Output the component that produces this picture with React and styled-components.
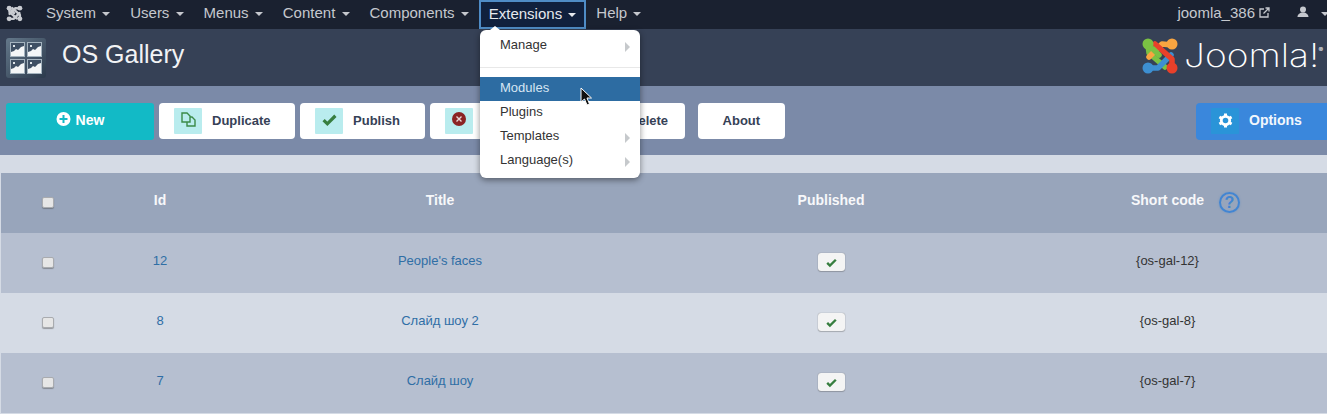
import React from 'react';
import styled, { createGlobalStyle } from 'styled-components';

const GlobalStyle = createGlobalStyle`
  html, body {
    margin: 0;
    padding: 0;
    background: #d5dbe5;
    overflow: hidden;
  }
  body {
    font-family: "Liberation Sans", Arial, sans-serif;
    color: #333;
  }
`;

const Page = styled.div`
  position: relative;
  width: 1327px;
  height: 414px;
  overflow: hidden;
`;

const Navbar = styled.nav`
  display: flex;
  align-items: stretch;
  height: 28px;
  padding-bottom: 1px;
  background: #1a2130;
`;

const Brand = styled.div`
  display: flex;
  align-items: center;
  justify-content: center;
  width: 28px;
  margin-right: 8px;
  padding-bottom: 1px;
`;

const NavItem = styled.div`
  display: flex;
  align-items: center;
  box-sizing: border-box;
  height: 29px;
  padding: 0 10px 4px;
  font-size: 15px;
  color: ${p => (p.$active ? '#e6e9ee' : '#c5c8ce')};
  white-space: nowrap;
  ${p => p.$active && `
    background: #10203d;
    border: 2px solid #4f8cc6;
    padding: 0 8px 2px;
  `}
`;

const Caret = styled.span`
  display: inline-block;
  margin-left: ${p => p.$gap || 6.2}px;
  margin-top: 3px;
  border-top: 4px solid currentColor;
  border-left: 4px solid transparent;
  border-right: 4px solid transparent;
`;

const NavRight = styled.div`
  display: flex;
  align-items: center;
  margin-left: auto;
  padding-bottom: 4px;
  color: #c5c8ce;
  font-size: 15px;
`;

const SiteLink = styled.span`
  display: flex;
  align-items: center;
  gap: 4px;
`;

const UserMenu = styled.span`
  display: flex;
  align-items: center;
  margin-left: 27px;
  margin-right: -2px;
`;

const Header = styled.header`
  display: flex;
  align-items: center;
  height: 57px;
  padding-left: 6px;
  background: #364156;
`;

const AppIcon = styled.div`
  display: grid;
  grid-template-columns: 15px 15px;
  grid-auto-rows: 15px;
  gap: 2px;
  align-content: center;
  justify-content: center;
  width: 40px;
  height: 40px;
  border-radius: 3px;
  background: linear-gradient(135deg, #64788a 0%, #2c3a4c 100%);
`;

const Title = styled.h1`
  margin: 0 0 6px 16px;
  font-size: 25px;
  font-weight: 400;
  color: #f2f3f5;
`;

const Logo = styled.div`
  display: flex;
  align-items: center;
  gap: 5px;
  margin-left: auto;
  margin-right: 5px;
  padding-bottom: 4px;
`;

const LogoWord = styled.span`
  position: relative;
  display: block;
  width: 138px;
  font-family: Inter, "Liberation Sans", sans-serif;
  font-size: 32px;
  font-weight: 200;
  line-height: 38px;
  white-space: nowrap;
  color: #fff;
  transform: scaleX(1.16);
  transform-origin: left center;
`;

const LogoMark = styled.sup`
  position: absolute;
  top: -6px;
  left: 116px;
  font-size: 6px;
  font-weight: 400;
`;

const Toolbar = styled.div`
  display: flex;
  align-items: flex-start;
  height: 69px;
  box-sizing: border-box;
  padding: 17px 0 0 6px;
  background: #7b8aa8;
`;

const NewButton = styled.button`
  display: flex;
  align-items: center;
  justify-content: center;
  gap: 5px;
  box-sizing: border-box;
  width: 148px;
  height: 37px;
  margin-right: 5px;
  padding: 0 0 3px;
  border: 0;
  border-radius: 3px;
  background: #12bac6;
  color: #fff;
  font: bold 14px "Liberation Sans", Arial, sans-serif;
`;

const ToolButton = styled.button`
  display: flex;
  align-items: center;
  box-sizing: border-box;
  height: 36px;
  margin-left: ${p => p.$offset || 0}px;
  margin-right: 5px;
  padding: 0 ${p => p.$right || 25}px 2px ${p => (p.$plain ? 25 : 15)}px;
  border: 0;
  border-radius: 4px;
  background: #fff;
  color: #364156;
  font: bold 13px "Liberation Sans", Arial, sans-serif;
`;

const IconBox = styled.span`
  display: flex;
  align-items: center;
  justify-content: center;
  box-sizing: border-box;
  width: 28px;
  height: 26px;
  margin: 2px ${p => p.$gap || 10}px 0 0;
  padding-bottom: ${p => p.$lift || 4}px;
  background: ${p => p.$bg || '#b9ecee'};
  border-radius: 1px;
`;

const OptionsButton = styled.button`
  display: flex;
  align-items: center;
  box-sizing: border-box;
  width: 131px;
  height: 37px;
  margin-left: auto;
  padding: 0 0 3px 15px;
  border: 0;
  border-radius: 4px 0 0 4px;
  background: #3a87dc;
  color: #f3f7fc;
  font: bold 14px "Liberation Sans", Arial, sans-serif;
`;

const Strip = styled.div`
  height: 18px;
`;

const Table = styled.div`
  margin-left: 1px;
`;

const Row = styled.div`
  display: grid;
  grid-template-columns: 93px 132px 428px 354px 319px;
  align-items: center;
  height: 60px;
  background: ${p => p.$bg};
  color: ${p => (p.$head ? '#f7f8fa' : '#333')};
  font-size: ${p => (p.$head ? 14 : 13)}px;
  font-weight: ${p => (p.$head ? 'bold' : 'normal')};
`;

const Cell = styled.div`
  text-align: center;
  padding-bottom: 6px;
`;

const LinkCell = styled(Cell)`
  color: #2f6ea5;
`;

const CheckCell = styled.div`
  display: flex;
  justify-content: center;
`;

const Check = styled.span`
  display: block;
  box-sizing: border-box;
  width: 12px;
  height: 11px;
  margin-top: -1px;
  border: 1px solid #a9abaf;
  border-radius: 2px;
  background: #e6e6e6;
  box-shadow: 0 1px 1px rgba(70, 70, 70, 0.45);
`;

const StateButton = styled.span`
  display: flex;
  align-items: center;
  justify-content: center;
  width: 27px;
  height: 18px;
  margin: -2px auto 0;
  border-radius: 3px;
  background: #f4f4f4;
  box-shadow: 0 0 1px rgba(50, 50, 50, 0.6), 0 1px 1px rgba(50, 50, 50, 0.25);
`;

const ShortHead = styled.span`
  position: relative;
  display: inline-block;
`;

const HelpBadge = styled.span`
  position: absolute;
  top: 0;
  left: 88px;
  display: flex;
  align-items: center;
  justify-content: center;
  box-sizing: border-box;
  width: 21px;
  height: 21px;
  border: 2px solid #4285d2;
  border-radius: 50%;
  color: #4285d2;
  font-size: 16px;
  font-weight: bold;
  box-shadow: 0 0 2px rgba(66, 133, 210, 0.5);
`;

const Menu = styled.div`
  position: absolute;
  top: 30px;
  left: 480px;
  box-sizing: border-box;
  width: 160px;
  height: 148px;
  padding-top: 4px;
  border-radius: 6px;
  background: #fff;
  box-shadow: 0 2px 6px rgba(0, 0, 0, 0.45);
  &::before {
    content: '';
    position: absolute;
    top: -4px;
    left: 10px;
    border-bottom: 4px solid #fff;
    border-left: 5px solid transparent;
    border-right: 5px solid transparent;
  }
`;

const MenuItem = styled.div`
  position: relative;
  box-sizing: border-box;
  height: 24px;
  padding: 3px 0 0 20px;
  line-height: 15px;
  font-size: 13px;
  color: ${p => (p.$active ? '#d6e6f3' : '#333')};
  background: ${p => (p.$active ? '#2d6ca2' : 'transparent')};
  ${p => p.$sub && `
    &::after {
      content: '';
      position: absolute;
      top: 8px;
      right: 10px;
      border-left: 5px solid #c6c9cc;
      border-top: 5px solid transparent;
      border-bottom: 5px solid transparent;
    }
  `}
`;

const Divider = styled.div`
  height: 1px;
  margin: 9px 0;
  background: #e8e8e8;
`;

const Pointer = styled.svg`
  position: absolute;
  top: 87px;
  left: 580px;
`;

const JoomlaGlyph = ({ size, mono }) => {
  const c = mono
    ? ['#c9ccd2', '#c9ccd2', '#c9ccd2', '#c9ccd2']
    : ['#7ac143', '#f9a541', '#3d8fd1', '#e8402a'];
  return (
    <svg width={size} height={size} viewBox="0 0 38 38" fill="none">
      <g strokeWidth="5.5" strokeLinecap="round" strokeLinejoin="round">
        <path d="M7 8 L8 16 L24 30" stroke={c[0]} />
        <path d="M31 8 L21 7 L8 20" stroke={c[1]} />
        <path d="M8 31 L17 31 L30 18" stroke={c[2]} />
        <path d="M31 31 L31 22 L14 7" stroke={c[3]} />
        <path d="M12 12 L18 18" stroke={c[0]} />
      </g>
      <circle cx="7" cy="7" r="5.5" fill={c[0]} />
      <circle cx="31" cy="7" r="5.5" fill={c[1]} />
      <circle cx="7" cy="31" r="5.5" fill={c[2]} />
      <circle cx="31" cy="31" r="5.5" fill={c[3]} />
    </svg>
  );
};

const PictureTile = () => (
  <svg width="15" height="15" viewBox="0 0 15 15">
    <rect x="0.5" y="0.5" width="14" height="14" fill="#3f5064" stroke="#a4b3be" />
    <path d="M1 14 V10 L4 9 L6 7 L8 8 L11 5 L14 4 V14 Z" fill="#f4f6f7" />
    <rect x="3" y="3" width="2" height="2" fill="#dfe6ea" />
  </svg>
);

const CheckIcon = ({ size = 14 }) => (
  <svg width={size} height={size} viewBox="0 0 14 14">
    <path d="M1.5 7.5 L5 11 L12.5 3.5" fill="none" stroke="#377e3f" strokeWidth="3" />
  </svg>
);

const DuplicateIcon = () => (
  <svg width="15" height="15" viewBox="0 0 15 15" fill="none" stroke="#3b8a48" strokeWidth="1.4">
    <path d="M1 1 H6 L9 4 V10 H1 Z" />
    <path d="M9 5 H11 L14 8 V14 H6 V10" />
  </svg>
);

const CrossIcon = () => (
  <svg width="14" height="14" viewBox="0 0 14 14">
    <circle cx="7" cy="7" r="7" fill="#8b2323" />
    <path d="M4.5 4.5 L9.5 9.5 M9.5 4.5 L4.5 9.5" stroke="#e9d6d6" strokeWidth="1.4" />
  </svg>
);

const PlusIcon = () => (
  <svg width="15" height="16" viewBox="0 0 15 16">
    <circle cx="7.5" cy="7" r="7" fill="#fff" />
    <path d="M7.5 3 V11 M3.5 7 H11.5" stroke="#12bac6" strokeWidth="2" />
  </svg>
);

const GearIcon = () => (
  <svg width="15" height="15" viewBox="0 0 15 15">
    <circle cx="7.5" cy="7.5" r="4.2" fill="none" stroke="#fff" strokeWidth="2.8" />
    <path
      d="M7.5 0.5 V3 M7.5 12 V14.5 M1.4 4 L3.6 5.2 M11.4 9.8 L13.6 11 M1.4 11 L3.6 9.8 M11.4 5.2 L13.6 4"
      stroke="#fff"
      strokeWidth="3"
    />
  </svg>
);

const ExternalIcon = () => (
  <svg width="11" height="11" viewBox="0 0 11 11" fill="none" stroke="#c5c8ce" strokeWidth="1.3">
    <path d="M5 2 H1 V10 H9 V6" />
    <path d="M4.5 6.5 L10 1 M6.5 1 H10 V4.5" />
  </svg>
);

const UserIcon = () => (
  <svg width="12" height="12" viewBox="0 0 12 12" fill="#c5c8ce">
    <circle cx="6" cy="3.5" r="3" />
    <path d="M0.5 11 C0.5 8 3 7.2 4.5 6.5 H7.5 C9 7.2 11.5 8 11.5 11 Z" />
  </svg>
);

const navItems = ['System', 'Users', 'Menus', 'Content', 'Components', 'Extensions', 'Help'];

const rows = [
  { id: 12, title: "People's faces", code: '{os-gal-12}', bg: '#b6bfd0' },
  { id: 8, title: 'Слайд шоу 2', code: '{os-gal-8}', bg: '#d5dbe5' },
  { id: 7, title: 'Слайд шоу', code: '{os-gal-7}', bg: '#b6bfd0' },
];

export default function App() {
  return (
    <Page>
      <GlobalStyle />
      <Navbar>
        <Brand>
          <JoomlaGlyph size={17} mono />
        </Brand>
        {navItems.map(name => (
          <NavItem key={name} $active={name === 'Extensions'}>
            {name}
            <Caret />
          </NavItem>
        ))}
        <NavRight>
          <SiteLink>
            joomla_386
            <ExternalIcon />
          </SiteLink>
          <UserMenu>
            <UserIcon />
            <Caret $gap={12} />
          </UserMenu>
        </NavRight>
      </Navbar>

      <Header>
        <AppIcon>
          <PictureTile />
          <PictureTile />
          <PictureTile />
          <PictureTile />
        </AppIcon>
        <Title>OS Gallery</Title>
        <Logo>
          <JoomlaGlyph size={38} />
          <LogoWord>
            Joomla!
            <LogoMark>®</LogoMark>
          </LogoWord>
        </Logo>
      </Header>

      <Toolbar>
        <NewButton>
          <PlusIcon />
          New
        </NewButton>
        <ToolButton $right={24.5}>
          <IconBox><DuplicateIcon /></IconBox>
          Duplicate
        </ToolButton>
        <ToolButton>
          <IconBox><CheckIcon size={15} /></IconBox>
          Publish
        </ToolButton>
        <ToolButton $right={24.5}>
          <IconBox><CrossIcon /></IconBox>
          Unpublish
        </ToolButton>
        <ToolButton $right={16.5}>
          <IconBox><CrossIcon /></IconBox>
          Delete
        </ToolButton>
        <ToolButton $plain $offset={8} $right={24.5}>About</ToolButton>
        <OptionsButton>
          <IconBox $bg="#2a94d8" $lift={2}><GearIcon /></IconBox>
          Options
        </OptionsButton>
      </Toolbar>

      <Strip />

      <Table>
        <Row $head $bg="#98a5bb">
          <CheckCell><Check /></CheckCell>
          <Cell>Id</Cell>
          <Cell>Title</Cell>
          <Cell>Published</Cell>
          <Cell>
            <ShortHead>
              Short code
              <HelpBadge>?</HelpBadge>
            </ShortHead>
          </Cell>
        </Row>
        {rows.map(row => (
          <Row key={row.id} $bg={row.bg}>
            <CheckCell><Check /></CheckCell>
            <LinkCell>{row.id}</LinkCell>
            <LinkCell>{row.title}</LinkCell>
            <div>
              <StateButton><CheckIcon size={11} /></StateButton>
            </div>
            <Cell>{row.code}</Cell>
          </Row>
        ))}
      </Table>

      <Menu>
        <MenuItem $sub>Manage</MenuItem>
        <Divider />
        <MenuItem $active>Modules</MenuItem>
        <MenuItem>Plugins</MenuItem>
        <MenuItem $sub>Templates</MenuItem>
        <MenuItem $sub>Language(s)</MenuItem>
      </Menu>

      <Pointer width="13" height="19" viewBox="0 0 13 19">
        <path d="M1 1 V15 L4.5 12 L7 18 L9.5 17 L7 11 H11.5 Z" fill="#111" stroke="#fff" strokeWidth="1" />
      </Pointer>
    </Page>
  );
}
